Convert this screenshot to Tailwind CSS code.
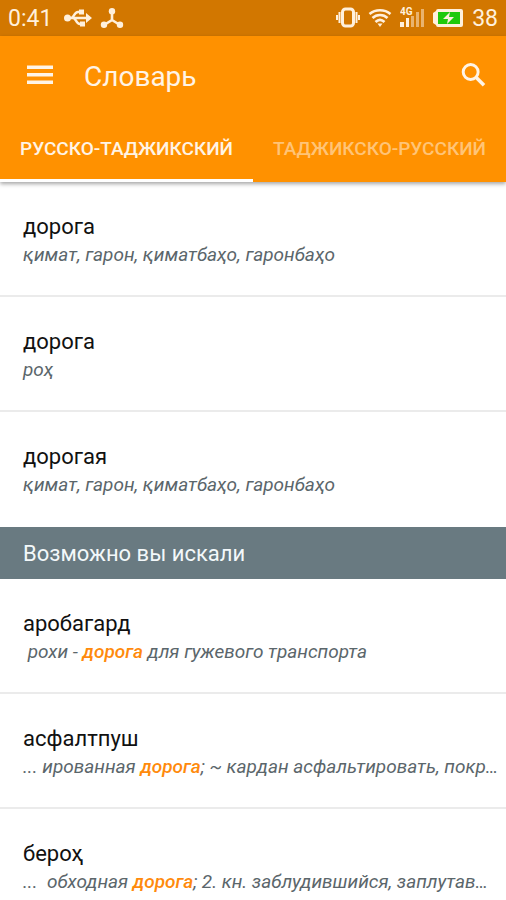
<!DOCTYPE html>
<html lang="ru">
<head>
    <meta charset="UTF-8">
    <meta name="viewport" content="width=device-width, initial-scale=1.0">
    <title>Словарь</title>
    <script src="https://cdn.jsdelivr.net/npm/@tailwindcss/browser@4"></script>
</head>
<body class="bg-white font-['Roboto','Noto_Sans',sans-serif] text-[#111]">

    <!-- Status bar -->
    <div class="flex h-9 items-center justify-between bg-[#d27700] px-2 text-[23px] text-[#fff0dc]">
        <div class="flex items-center gap-3">
            <span class="pt-[3px]">0:41</span>
            <svg class="h-5 w-7" viewBox="0 0 28 20" fill="none" stroke="currentColor" stroke-width="2.4">
                <path d="M3 10h20M7 10c3 0 3-6 7-6h3M9 10c3 0 3 6 7 6h2" />
                <circle cx="3.5" cy="10" r="3.5" fill="currentColor" stroke="none" />
                <path d="M22 5l6 5-6 5zM15 1.5h5v5h-5zM16 13.5h5v5h-5z" fill="currentColor" stroke="none" />
            </svg>
            <svg class="-ml-1 h-5 w-6" viewBox="0 0 24 20" fill="none" stroke="currentColor" stroke-width="2.6">
                <path d="M12 4v8L4 17M12 12l8 5" />
                <g fill="currentColor" stroke="none">
                    <circle cx="12" cy="3.2" r="3.2" />
                    <circle cx="4" cy="16.8" r="3.2" />
                    <circle cx="20" cy="16.8" r="3.2" />
                </g>
            </svg>
        </div>
        <div class="flex items-center gap-2">
            <svg class="h-6 w-6" viewBox="0 0 24 24" fill="none" stroke="currentColor" stroke-width="2">
                <rect x="6.5" y="3" width="11" height="17" rx="3" stroke-width="3" />
                <path d="M3.5 6v11M20.5 6v11M1 9v5M23 9v5" />
            </svg>
            <svg class="h-5 w-6" viewBox="0 0 24 20" fill="none" stroke="currentColor" stroke-width="2.6">
                <path d="M1.5 6c6-5 15-5 21 0M4.5 10c4-4 11-4 15 0M7.5 14c3-3 6-3 9 0" />
                <path d="M9.5 15.5h5L12 19z" fill="currentColor" stroke="none" />
            </svg>
            <svg class="h-6 w-6" viewBox="0 0 24 24" fill="currentColor">
                <text x="0" y="9" font-size="10" font-weight="700">4G</text>
                <path d="M0 16h4v5H0zM6 12h3v9H6z" />
                <path d="M11 10h3v11h-3zM16 6h3v15h-3zM21 3h3v18h-3z" opacity=".5" />
            </svg>
            <svg class="h-5 w-8" viewBox="0 0 32 20">
                <path d="M6 1h23a2 2 0 0 1 2 2v14a2 2 0 0 1-2 2H6a2 2 0 0 1-2-2l-3-2V5l3-2a2 2 0 0 1 2-2z" fill="currentColor" />
                <path d="M6 4h22v12H6z" fill="#1fc90b" />
                <path d="M18 4l-7 7h5l-1 5 7-7h-5z" fill="currentColor" />
            </svg>
            <span class="pt-[3px]">38</span>
        </div>
    </div>

    <header class="relative bg-[#ff9100] text-[#fff4e6] shadow-[0_2px_4px_rgba(0,0,0,0.35)]">
        <div class="flex h-20 items-center px-6">
            <button type="button" aria-label="Меню" class="mr-7 w-8">
                <svg class="h-8 w-8" viewBox="0 0 32 32" fill="currentColor">
                    <path d="M3 5.500h26v3.500H3zM3 13h26v3.500H3zM3 20.500h26v3.500H3z" />
                </svg>
            </button>
            <h1 class="flex-1 pt-px text-[28px]">Словарь</h1>
            <button type="button" aria-label="Поиск" class="-mr-2">
                <svg class="h-8 w-8" viewBox="0 0 24 24" fill="none" stroke="currentColor" stroke-width="2.2">
                    <circle cx="9.5" cy="9" r="5.6" />
                    <path d="M13.500 13l6 6" stroke-width="2.6" />
                </svg>
            </button>
        </div>
        <nav class="grid grid-cols-2 text-center text-[19px] font-medium whitespace-nowrap">
            <a href="#ru-tg" class="flex h-[66px] items-center justify-center border-b-3 border-white pt-1">РУССКО-ТАДЖИКСКИЙ</a>
            <a href="#tg-ru" class="flex h-[66px] items-center justify-center border-b-3 border-transparent pt-1 text-[#ffc477]">ТАДЖИКСКО-РУССКИЙ</a>
        </nav>
    </header>

    <main>
        <ul id="ru-tg" class="divide-y-2 divide-[#ebebeb]">
            <li class="h-[115px] pt-[29px] pl-[23px]">
                <h2 class="text-[22px] leading-8">дорога</h2>
                <p class="text-[19px] leading-6 whitespace-nowrap text-[#5b666b] italic">қимат, гарон, қиматбаҳо, гаронбаҳо</p>
            </li>
            <li class="h-[115px] pt-[29px] pl-[23px]">
                <h2 class="text-[22px] leading-8">дорога</h2>
                <p class="text-[19px] leading-6 whitespace-nowrap text-[#5b666b] italic">роҳ</p>
            </li>
            <li class="h-[115px] pt-[29px] pl-[23px]">
                <h2 class="text-[22px] leading-8">дорогая</h2>
                <p class="text-[19px] leading-6 whitespace-nowrap text-[#5b666b] italic">қимат, гарон, қиматбаҳо, гаронбаҳо</p>
            </li>
        </ul>

        <h2 class="flex h-[52px] items-center bg-[#697a81] pt-px pl-[23px] text-[22px] text-[#f3f8fa]">Возможно вы искали</h2>

        <ul class="divide-y-2 divide-[#ebebeb]">
            <li class="h-[115px] pt-[29px] pl-[23px]">
                <h3 class="text-[22px] leading-8">аробагард</h3>
                <p class="text-[19px] leading-6 whitespace-nowrap text-[#5b666b] italic">&nbsp;рохи - <b class="font-medium text-[#ff8a0c]">дорога</b> для гужевого транспорта</p>
            </li>
            <li class="h-[115px] pt-[29px] pl-[23px]">
                <h3 class="text-[22px] leading-8">асфалтпуш</h3>
                <p class="text-[19px] leading-6 whitespace-nowrap text-[#5b666b] italic">... ированная <b class="font-medium text-[#ff8a0c]">дорога</b>; ~ кардан асфальтировать, покр…</p>
            </li>
            <li class="pt-[29px] pl-[23px]">
                <h3 class="text-[22px] leading-8">бероҳ</h3>
                <p class="text-[19px] leading-6 whitespace-nowrap text-[#5b666b] italic">... &nbsp;обходная <b class="font-medium text-[#ff8a0c]">дорога</b>; 2. кн. заблудившийся, заплутав…</p>
            </li>
        </ul>
    </main>

</body>
</html>
